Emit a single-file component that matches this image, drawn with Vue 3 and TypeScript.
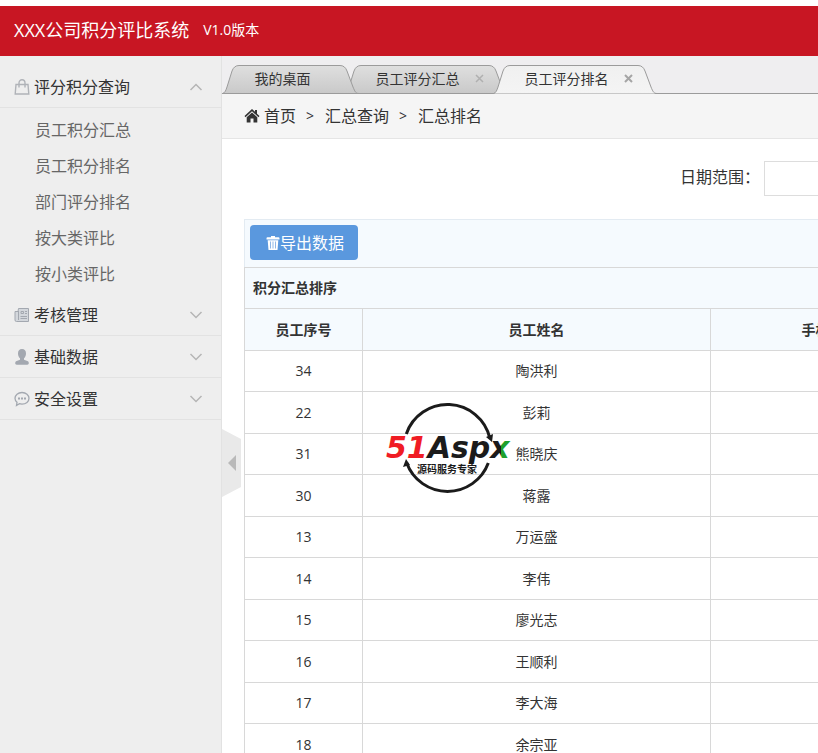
<script setup lang="ts">
import { ref } from 'vue'

interface MenuGroup {
  title: string
  icon: 'bag' | 'news' | 'user' | 'chat'
  open: boolean
  items: string[]
}

interface Tab {
  title: string
  width: number
  closable: boolean
}

const groups = ref<MenuGroup[]>([
  {
    title: '评分积分查询',
    icon: 'bag',
    open: true,
    items: ['员工积分汇总', '员工积分排名', '部门评分排名', '按大类评比', '按小类评比'],
  },
  { title: '考核管理', icon: 'news', open: false, items: [] },
  { title: '基础数据', icon: 'user', open: false, items: [] },
  { title: '安全设置', icon: 'chat', open: false, items: [] },
])

const tabs: Tab[] = [
  { title: '我的桌面', width: 137, closable: false },
  { title: '员工评分汇总', width: 164, closable: true },
  { title: '员工评分排名', width: 164, closable: true },
]
const active = ref(2)

const outline = (w: number): string =>
  `M0.5 28.5 C3 28 4 25 5 22 L10 6 Q12 0.5 17 0.5 H${w - 19} Q${w - 14} 0.5 ${w - 12} 6 L${w - 6} 22 C${w - 4} 27 ${w - 3} 28.5 ${w} 28.5`

const rows: { id: number; name: string }[] = [
  { id: 34, name: '陶洪利' },
  { id: 22, name: '彭莉' },
  { id: 31, name: '熊晓庆' },
  { id: 30, name: '蒋露' },
  { id: 13, name: '万运盛' },
  { id: 14, name: '李伟' },
  { id: 15, name: '廖光志' },
  { id: 16, name: '王顺利' },
  { id: 17, name: '李大海' },
  { id: 18, name: '余宗亚' },
]
</script>

<template>
  <div class="page">
    <header class="top">
      <h1>XXX公司积分评比系统</h1>
      <span class="version">V1.0版本</span>
    </header>

    <div class="body">
      <aside class="side">
        <nav>
          <section v-for="g in groups" :key="g.title">
            <button class="group" type="button" :aria-expanded="g.open" @click="g.open = !g.open">
              <svg class="gicon" viewBox="0 0 16 16" width="16" height="16" fill="none" stroke="#a3a8b0">
                <template v-if="g.icon === 'bag'">
                  <path d="M2 5.500h12l.8 9.500H1.200z" stroke="#b0b3b8" stroke-width="1.400" />
                  <path d="M5 8.500V4a3 3.300 0 0 1 6 0v4.500" stroke="#b0b3b8" stroke-width="1.400" />
                </template>
                <template v-else-if="g.icon === 'news'">
                  <path d="M4.500 1.500h10v13h-12q-1.500 0-1.500-1.500V4.500h3z" fill="#d3d7dc" />
                  <path d="M4.500 4v9M7 4.500h2.500v2h-2.500zM11 4.500h2M11 6.500h2M6.500 9.500h6.500M6.500 11.500h6.500" />
                </template>
                <template v-else-if="g.icon === 'user'">
                  <path
                    d="M8 0c2.600 0 4 1.800 4 4.400 0 2-.8 3.900-2 4.900v1.400l3.300 1.200c1 .4 1.500 1.200 1.500 2.200 0 1-.6 1.600-1.500 1.600H2.700c-.9 0-1.500-.6-1.500-1.600 0-1 .5-1.800 1.500-2.200L6 10.700V9.300c-1.200-1-2-2.900-2-4.900C4 1.800 5.400 0 8 0z"
                    fill="#a3a8b0"
                    stroke="none"
                  />
                </template>
                <template v-else>
                  <path d="M8 1.500c4 0 7 2.500 7 5.800s-3 5.800-7 5.800c-1 0-1.800-.1-2.600-.4L2.500 14.500l.5-3.200C1.700 10.300 1 8.900 1 7.300 1 4 4 1.500 8 1.500z" stroke-width="1.300" />
                  <path d="M4 7.500h2M7 7.500h2M10 7.500h2" stroke-width="2" />
                </template>
              </svg>
              <span>{{ g.title }}</span>
              <svg class="chev" :class="{ up: g.open }" viewBox="0 0 14 8" width="14" height="8">
                <path d="M1.500 1L7 6.500L12.500 1" fill="none" stroke="#b5b5b5" stroke-width="1.500" />
              </svg>
            </button>
            <ul v-if="g.open && g.items.length">
              <li v-for="i in g.items" :key="i"><a href="#">{{ i }}</a></li>
            </ul>
          </section>
        </nav>
      </aside>

      <main class="main">
        <div class="tabs">
          <div v-for="(t, n) in tabs" :key="t.title" class="tab" :class="{ on: n === active, first: n === 0 }" :style="{ width: t.width + 'px' }">
            <svg class="shape" :width="t.width" height="29" :viewBox="`0 0 ${t.width} 29`">
              <defs>
                <linearGradient :id="'tab' + n" x1="0" y1="0" x2="0" y2="1">
                  <stop offset="0" :stop-color="n === active ? '#f0f0f0' : '#dfdfdf'" />
                  <stop offset="1" :stop-color="n === active ? '#f4f4f4' : '#c9c9c9'" />
                </linearGradient>
              </defs>
              <path :d="outline(t.width)" :fill="`url(#tab${n})`" stroke="#9b9b9b" />
              <path v-if="n !== active" :d="`M0 28.5H${t.width}`" stroke="#9b9b9b" />
            </svg>
            <button class="label" type="button" @click="active = n">{{ t.title }}</button>
            <button v-if="t.closable" class="close" type="button" aria-label="关闭">
              <svg viewBox="0 0 9 9" width="9" height="9">
                <path d="M1 1l7 7M8 1L1 8" :stroke="n === active ? '#a5a5a5' : '#b0b0b0'" :stroke-width="n === active ? 2 : 1.5" />
              </svg>
            </button>
          </div>
        </div>

        <nav class="crumbs">
          <svg viewBox="0 0 16 14" width="16" height="14" fill="#333">
            <path d="M8 0L0.500 7l1 1.200L8 2.300l6.500 5.900 1-1.200L13 4.700V1h-2v1.800z" />
            <path d="M8 3.500L2.700 8.300V13.500H6.500V9.500h3v4h3.800V8.300z" />
          </svg>
          <a href="#">首页</a>
          <span class="sep">&gt;</span>
          <span>汇总查询</span>
          <span class="sep">&gt;</span>
          <span>汇总排名</span>
        </nav>

        <div class="view">
          <div class="content">
            <form class="search" @submit.prevent>
              <label for="range">日期范围：</label>
              <input id="range" type="text" />
            </form>

            <div class="toolbar">
              <button class="export" type="button">
                <svg viewBox="0 0 14 14" width="14" height="14">
                  <path d="M5 0h4v1.200h3.500q1 0 1 1.300v1H.5v-1q0-1.300 1-1.300H5z" fill="#fff" />
                  <path d="M1.700 4.200h10.600L11.500 14h-9z" fill="#fff" />
                  <path d="M4.500 5.500v7M7 5.500v7M9.500 5.500v7" stroke="#8fb8e8" />
                </svg>导出数据
              </button>
            </div>

            <table>
              <colgroup>
                <col class="c-id" />
                <col class="c-name" />
                <col class="c-phone" />
                <col />
              </colgroup>
              <thead>
                <tr><th class="caption" colspan="4">积分汇总排序</th></tr>
                <tr class="heads">
                  <th>员工序号</th>
                  <th>员工姓名</th>
                  <th>手机</th>
                  <th></th>
                </tr>
              </thead>
              <tbody>
                <tr v-for="r in rows" :key="r.id">
                  <td>{{ r.id }}</td>
                  <td>{{ r.name }}</td>
                  <td></td>
                  <td></td>
                </tr>
              </tbody>
            </table>
          </div>
        </div>

        <button class="fold" type="button" aria-label="收起菜单">
          <svg viewBox="0 0 19 68" width="19" height="68">
            <path d="M0 0L19 10V58L0 68z" fill="#e9e9e9" />
            <path d="M14 26v16L6 34z" fill="#b9b9b9" />
          </svg>
        </button>

        <svg class="mark" viewBox="0 0 130 94" width="130" height="94" role="img" aria-label="51Aspx">
          <defs>
            <linearGradient id="xfill" gradientUnits="userSpaceOnUse" x1="107" y1="0" x2="125" y2="0">
              <stop offset="0.5" stop-color="#1b1b1b" />
              <stop offset="0.5" stop-color="#1fa02c" />
            </linearGradient>
          </defs>
          <g fill="none" stroke="#1b1b1b" stroke-width="3">
            <path d="M21.300 33A43.500 43.500 0 0 1 104.800 37" />
            <path d="M103.300 62A43.500 43.500 0 0 1 21.700 62" />
          </g>
          <path d="M101 36l7-3-1 8zM18 66l3-8 4 6z" fill="#1b1b1b" />
          <text class="word" x="1" y="57"><tspan fill="#f01c24">51</tspan><tspan fill="#1b1b1b">Asp</tspan><tspan fill="url(#xfill)">x</tspan></text>
          <text class="sub" x="62" y="72" text-anchor="middle">源码服务专家</text>
        </svg>
      </main>
    </div>
  </div>
</template>

<style>
body {
  overflow: hidden;
}
</style>

<style scoped>
.page {
  height: 100vh;
  display: flex;
  flex-direction: column;
  padding-top: 6px;
  box-sizing: border-box;
  background: #fff;
  color: #333;
  font: 14px/20px "Open Sans", "Noto Sans CJK SC", sans-serif;
}
button {
  border: 0;
  padding: 0;
  background: none;
  color: inherit;
  font: inherit;
  cursor: pointer;
}
a {
  color: inherit;
  text-decoration: none;
}
.top {
  display: flex;
  align-items: center;
  gap: 14px;
  flex: none;
  height: 50px;
  padding: 0 14px;
  box-sizing: border-box;
  padding-bottom: 2px;
  background: #c81623;
  color: #fff;
}
h1 {
  margin: 0;
  font-size: 18px;
  font-weight: 400;
}
.body {
  flex: 1;
  display: flex;
  min-height: 0;
}
.side {
  flex: none;
  width: 222px;
  box-sizing: border-box;
  padding-top: 10px;
  background: #eee;
  border-right: 1px solid #e2e2e2;
  font-size: 16px;
}
.group {
  display: flex;
  align-items: center;
  gap: 4px;
  width: 100%;
  height: 42px;
  padding: 0 18px 0 14px;
  border-bottom: 1px solid #e2e2e2;
}
.chev {
  margin-left: auto;
}
.chev.up {
  transform: rotate(180deg);
}
ul {
  margin: 0;
  padding: 4px 0 2px;
  list-style: none;
}
li a {
  display: block;
  padding-left: 35px;
  line-height: 36px;
  color: #666;
}
.main {
  position: relative;
  flex: 1;
  min-width: 0;
  display: flex;
  flex-direction: column;
  overflow: hidden;
}
.tabs {
  display: flex;
  flex: none;
  padding-top: 9px;
  background: linear-gradient(#9b9b9b, #9b9b9b) 0 100% / 100% 1px no-repeat #efeef0;
}
.tab {
  position: relative;
  display: flex;
  align-items: center;
  justify-content: center;
  gap: 15px;
  flex: none;
  height: 29px;
  box-sizing: border-box;
  padding: 0 16px 2px 0;
}
.tab + .tab {
  margin-left: -15px;
  padding: 0 0 2px 7px;
}
.tab.first {
  z-index: 1;
}
.tab.on {
  z-index: 2;
}
.shape {
  position: absolute;
  left: 0;
  top: 0;
}
.label,
.close {
  position: relative;
}
.close {
  display: flex;
}
.crumbs {
  display: flex;
  align-items: center;
  flex: none;
  height: 44px;
  padding-left: 22px;
  background: #f5f5f5;
  border-bottom: 1px solid #e5e5e5;
  font-size: 16px;
}
.crumbs svg {
  margin-right: 4px;
}
.sep {
  margin: 0 11px 0 10px;
  font-size: 14px;
}
.view {
  flex: 1;
  min-height: 0;
  overflow: hidden;
  padding: 22px 0 0 22px;
}
.content {
  min-width: 1120px;
}
.search {
  display: flex;
  align-items: center;
  gap: 4px;
  margin: 0 0 23px 436px;
  font-size: 16px;
}
.search label {
  padding-bottom: 3px;
}
.search input {
  width: 240px;
  height: 35px;
  box-sizing: border-box;
  border: 1px solid #ddd;
  padding: 0 8px;
  font: inherit;
}
.toolbar {
  padding: 5px 5px 7px;
  border: 1px solid #e3ebf2;
  border-bottom: 0;
  background: #f5fafe;
}
.export {
  display: flex;
  align-items: center;
  height: 35px;
  padding: 0 14px 0 16px;
  border-radius: 4px;
  background: #5a98de;
  color: #fff;
  font-size: 16px;
}
table {
  width: 100%;
  table-layout: fixed;
  border-collapse: collapse;
}
.c-id {
  width: 118px;
}
.c-name {
  width: 348px;
}
.c-phone {
  width: 210px;
}
th,
td {
  height: 41px;
  box-sizing: border-box;
  padding: 0 8px;
  border: 1px solid #d8d8d8;
  text-align: center;
}
th {
  background: #f5fafe;
  font-weight: 700;
}
.caption {
  text-align: left;
}
.heads th,
tbody tr:nth-child(even) td {
  height: 42px;
}
.fold {
  position: absolute;
  left: 0;
  top: 373px;
  display: flex;
}
.mark {
  position: absolute;
  left: 163px;
  top: 345px;
}
.word {
  font: italic 700 30px "DejaVu Sans", sans-serif;
}
.sub {
  font: 700 10px "Noto Sans CJK SC", sans-serif;
  fill: #1b1b1b;
}
</style>
